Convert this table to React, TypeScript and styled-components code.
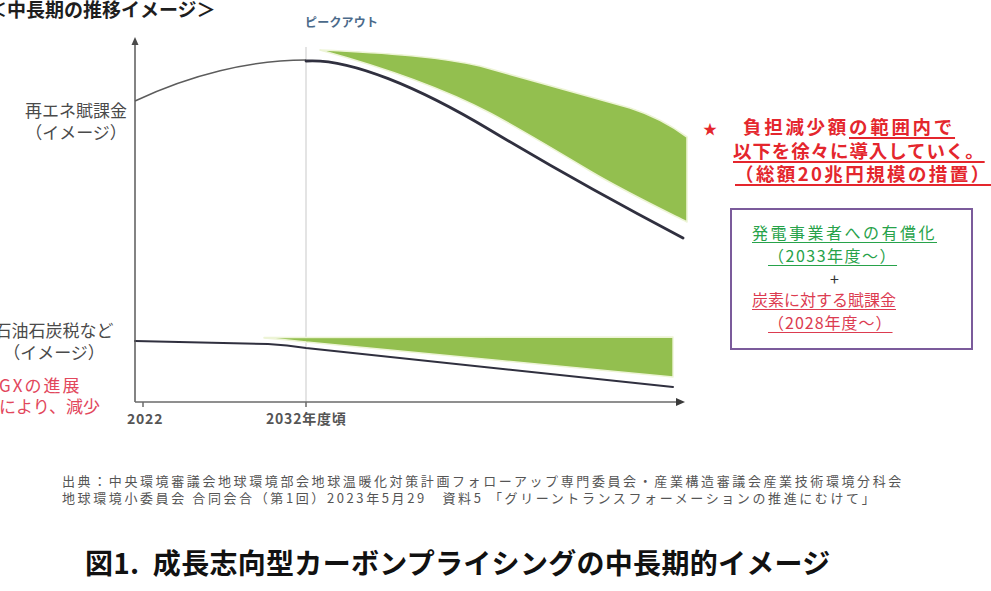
import React from 'react';
import styled, { createGlobalStyle } from 'styled-components';

const GlobalStyle = createGlobalStyle`
  html, body {
    margin: 0;
    padding: 0;
    background: #ffffff;
  }
  body {
    font-family: "Noto Sans CJK JP", "Noto Sans", sans-serif;
    overflow: hidden;
  }
`;

const Page = styled.div`
  width: 991px;
  height: 591px;
  overflow: hidden;
  display: flex;
  flex-direction: column;
`;

const Heading = styled.h2`
  margin: 0 0 0 -12px;
  height: 14px;
  font-size: 19px;
  line-height: 17px;
  font-weight: 700;
  color: #1e1e1e;
  white-space: nowrap;
`;

const ChartRow = styled.div`
  display: grid;
  grid-template-columns: 135px 560px 1fr;
  height: 418px;
`;

/* left side: series names */
const SideLabels = styled.div`
  display: flex;
  flex-direction: column;
  padding-top: 85px;
`;

const LabelBlock = styled.div<{ $offset: number; $width?: number; $gap?: number; $red?: boolean }>`
  margin-left: ${(p) => p.$offset}px;
  margin-top: ${(p) => p.$gap ?? 0}px;
  width: ${(p) => (p.$width ? `${p.$width}px` : 'auto')};
  text-align: ${(p) => (p.$width ? 'center' : 'left')};
  font-size: 17px;
  line-height: ${(p) => (p.$red ? 21 : 22)}px;
  color: ${(p) => (p.$red ? '#e2475c' : '#4a4a4a')};
  white-space: nowrap;
`;

const Wide = styled.span`
  letter-spacing: 2px;
`;

const ChartSvg = styled.svg`
  display: block;
  width: 560px;
  height: 418px;
  overflow: visible;
`;

const AxisLabel = styled.text`
  font-size: 14px;
  font-weight: 700;
  fill: #555;
  letter-spacing: 0.8px;
`;

const PeakLabel = styled.text`
  font-size: 12px;
  font-weight: 700;
  fill: #4b6a8a;
  letter-spacing: 0.2px;
`;

/* right side: notes */
const Notes = styled.div`
  display: flex;
  flex-direction: column;
  padding-top: 100.75px;
`;

const Pledge = styled.div`
  color: #e4262d;
  font-size: 18.5px;
  font-weight: 700;
  line-height: 22.5px;
  white-space: nowrap;
`;

const PledgeLine = styled.div<{ $indent: number; $spacing: number; $underline?: boolean }>`
  padding-left: ${(p) => p.$indent}px;
  letter-spacing: ${(p) => p.$spacing}px;
  text-decoration: ${(p) => (p.$underline ? 'underline' : 'none')};
  text-decoration-thickness: 1.5px;
  text-underline-offset: 3px;
`;

const Star = styled.span`
  display: inline-block;
  width: 40px;
  font-size: 14px;
  letter-spacing: 0;
`;

const Underlined = styled.span`
  text-decoration: underline;
  text-decoration-thickness: 1.5px;
  text-underline-offset: 3px;
`;

const PolicyBox = styled.div`
  box-sizing: border-box;
  width: 243px;
  height: 142px;
  margin: 23.75px 0 0 35px;
  padding: 10.5px 0 0 20px;
  border: 2px solid #7b5b9b;
`;

const tones = {
  green: '#27a24a',
  red: '#dc3b50',
  plain: '#333333',
};

const PolicyLine = styled.div<{ $tone: keyof typeof tones; $indent?: number; $spacing?: number }>`
  padding-left: ${(p) => p.$indent ?? 0}px;
  letter-spacing: ${(p) => p.$spacing ?? 0}px;
  font-size: 16px;
  line-height: 23px;
  height: ${(p) => (p.$tone === 'plain' ? 21 : 23)}px;
  color: ${(p) => tones[p.$tone]};
  white-space: nowrap;
  text-decoration: ${(p) => (p.$tone === 'plain' ? 'none' : 'underline')};
  text-decoration-thickness: 1px;
  text-underline-offset: 3px;
`;

/* footer */
const Source = styled.div`
  margin-top: 39.5px;
  padding-left: 62px;
  font-size: 13px;
  line-height: 17px;
  letter-spacing: 2.6px;
  color: #555;
  white-space: nowrap;
`;

const Caption = styled.h1`
  margin: 39.5px 0 0;
  padding-left: 85px;
  font-size: 28px;
  line-height: 34px;
  font-weight: 700;
  letter-spacing: 0.3px;
  color: #111;
  white-space: nowrap;
`;

const Chart = () => (
  <ChartSvg viewBox="135 14 560 418" xmlns="http://www.w3.org/2000/svg">
    <PeakLabel x={305} y={26.5}>ピークアウト</PeakLabel>
    <line x1={306} y1={47} x2={306} y2={402} stroke="#c9c9c9" strokeWidth={1} />

    {/* upper band */}
    <path
      d="M320,50 C390,53 440,57 480,66 L630,108 C655,116 672,126 687,137 L687,222 C655,206 622,190 590,171 C555,150 520,129 490,113 C450,92 400,72 320,50 Z"
      fill="#93bf4f"
      stroke="#edf4d6"
      strokeWidth={1.6}
      strokeLinejoin="round"
    />
    {/* lower band */}
    <path
      d="M264,337.5 L673,337 L673,377 L306,342 Q285,339.5 264,338 Z"
      fill="#93bf4f"
      stroke="#edf4d6"
      strokeWidth={1.4}
      strokeLinejoin="round"
    />

    <path d="M135,101 C190,75 250,60 306,60" fill="none" stroke="#5c5c5c" strokeWidth={1.4} />
    <path
      d="M306,61 C350,58 420,88 490,130 C560,172 620,205 683,238"
      fill="none"
      stroke="#30303f"
      strokeWidth={2.8}
      strokeLinecap="round"
    />
    <path
      d="M135,341 L268,344 Q287,345 306,348 L673,387"
      fill="none"
      stroke="#30303f"
      strokeWidth={2}
      strokeLinecap="round"
    />

    {/* axes */}
    <line x1={135} y1={402} x2={135} y2={44} stroke="#5a5a5a" strokeWidth={1.5} />
    <polygon points="135,37 131.5,45 138.5,45" fill="#4a4a4a" />
    <line x1={135} y1={402} x2={677} y2={402} stroke="#6a6a6a" strokeWidth={1.5} />
    <polygon points="685,402 676,398 676,406" fill="#3a3a3a" />
    <line x1={143} y1={402} x2={143} y2={407} stroke="#6a6a6a" strokeWidth={1.5} />
    <line x1={306} y1={402} x2={306} y2={407} stroke="#6a6a6a" strokeWidth={1.5} />

    <AxisLabel x={127} y={424}>2022</AxisLabel>
    <AxisLabel x={266} y={424}>2032年度頃</AxisLabel>
  </ChartSvg>
);

const App = () => (
  <Page>
    <GlobalStyle />
    <Heading>＜中長期の推移イメージ＞</Heading>

    <ChartRow>
      <SideLabels>
        <LabelBlock $offset={16} $width={120}>
          再エネ賦課金
          <br />
          （イメージ）
        </LabelBlock>
        <LabelBlock $offset={-8} $width={124} $gap={176}>
          石油石炭税など
          <br />
          （イメージ）
        </LabelBlock>
        <LabelBlock $offset={-1} $gap={10.5} $red>
          <Wide>GXの進展</Wide>
          <br />
          により、減少
        </LabelBlock>
      </SideLabels>

      <Chart />

      <Notes>
        <Pledge>
          <PledgeLine $indent={8} $spacing={2.7}>
            <Star>★</Star>
            負担減少額<Underlined>の範囲内で</Underlined>
          </PledgeLine>
          <PledgeLine $indent={38} $spacing={0.9} $underline>
            以下を徐々に導入していく。
          </PledgeLine>
          <PledgeLine $indent={40} $spacing={2.4} $underline>
            （総額20兆円規模の措置）
          </PledgeLine>
        </Pledge>

        <PolicyBox>
          <PolicyLine $tone="green" $spacing={2.5}>発電事業者への有償化</PolicyLine>
          <PolicyLine $tone="green" $indent={16} $spacing={1.5}>（2033年度～）</PolicyLine>
          <PolicyLine $tone="plain" $indent={78}>+</PolicyLine>
          <PolicyLine $tone="red">炭素に対する賦課金</PolicyLine>
          <PolicyLine $tone="red" $indent={16} $spacing={1}>（2028年度～）</PolicyLine>
        </PolicyBox>
      </Notes>
    </ChartRow>

    <Source>
      出典：中央環境審議会地球環境部会地球温暖化対策計画フォローアップ専門委員会・産業構造審議会産業技術環境分科会
      <br />
      地球環境小委員会 合同会合（第1回）2023年5月29　資料5 「グリーントランスフォーメーションの推進にむけて」
    </Source>

    <Caption>図1.&nbsp; 成長志向型カーボンプライシングの中長期的イメージ</Caption>
  </Page>
);

export default App;
